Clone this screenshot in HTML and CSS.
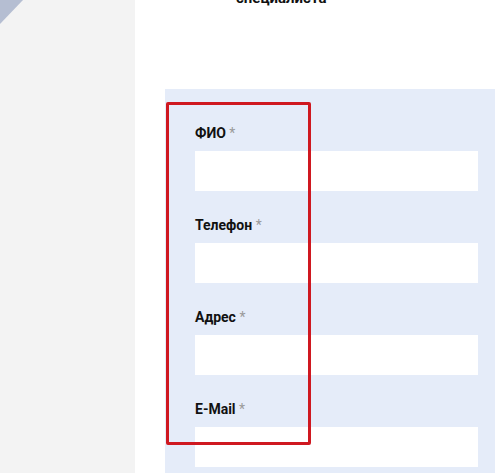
FILE: index.html
```
<html lang="ru">
<head>
    <meta charset="UTF-8">
    <meta name="viewport" content="width=device-width, initial-scale=1.0">
    <title>Заявка</title>
    <link rel="stylesheet" href="styles.css">
</head>
<body>
    <div class="sidebar"></div>
    <div class="main">
        <h2 class="title">специалиста</h2>
        <form class="form" action="">
            <div class="field">
                <label for="fio">ФИО <span class="req">*</span></label>
                <input type="text" id="fio" name="fio" />
            </div>
            <div class="field">
                <label for="phone">Телефон <span class="req">*</span></label>
                <input type="text" id="phone" name="phone" />
            </div>
            <div class="field">
                <label for="address">Адрес <span class="req">*</span></label>
                <input type="text" id="address" name="address" />
            </div>
            <div class="field">
                <label for="email">E-Mail <span class="req">*</span></label>
                <input type="text" id="email" name="email" />
            </div>
            <div class="highlight"></div>
        </form>
    </div>
</body>
</html>
```
FILE: styles.css
```
*{
    box-sizing: border-box;
    padding: 0;
    margin: 0;
}
body{
    display: flex;
    height: 100vh;
    overflow: hidden;
    font-family: Roboto, "Liberation Sans", sans-serif;
    color: #111;
    background-color: #fff;
}
.sidebar{
    width: 135px;
    flex-shrink: 0;
    background-color: #f3f3f3;
    position: relative;
}
.sidebar::before{
    content: "";
    position: absolute;
    left: 0;
    top: 0;
    width: 23px;
    height: 24px;
    background-color: #b5bed2;
    clip-path: polygon(0 0, 100% 0, 0 100%);
}
.main{
    flex: 1;
    padding-left: 30px;
}
.title{
    font-size: 15px;
    font-weight: 700;
    line-height: 18px;
    margin-top: -11px;
    padding-left: 71px;
}
.form{
    position: relative;
    margin-top: 82px;
    padding: 34px 17px 0 30px;
    background-color: #e5ecf9;
    height: 400px;
}
.field{
    display: flex;
    flex-direction: column;
    margin-bottom: 24px;
}
label{
    font-size: 14px;
    font-weight: 700;
    line-height: 20px;
    margin-bottom: 8px;
}
.req{
    color: #9a9a9a;
    font-weight: 400;
}
input{
    height: 40px;
    border: none;
    outline: none;
    background-color: #fff;
}
.highlight{
    position: absolute;
    left: 1px;
    top: 13px;
    width: 145px;
    height: 343px;
    border: 3px solid #cf1820;
    border-radius: 2px;
}
```
